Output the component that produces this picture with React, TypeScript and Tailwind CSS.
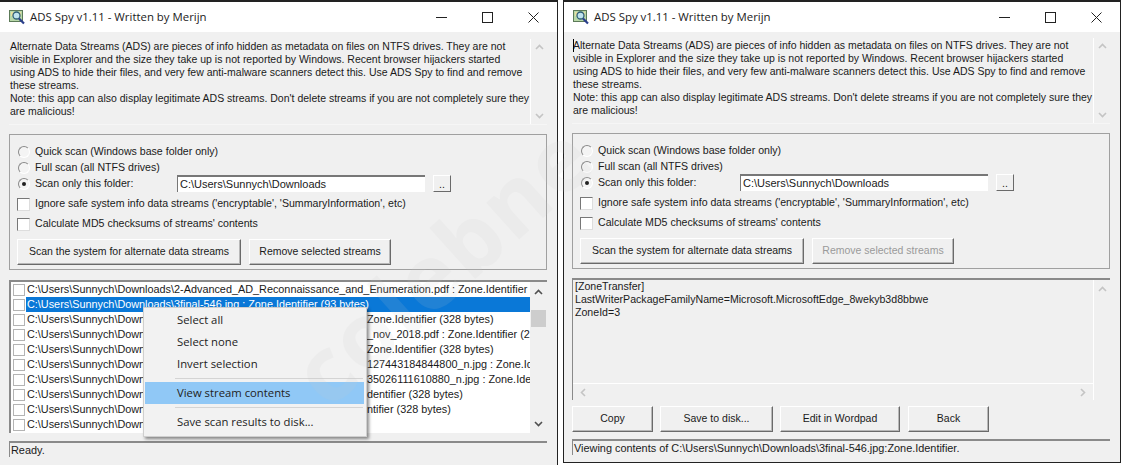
import React from 'react'

const info = [
	'Alternate Data Streams (ADS) are pieces of info hidden as metadata on files on NTFS drives. They are not',
	'visible in Explorer and the size they take up is not reported by Windows. Recent browser hijackers started',
	'using ADS to hide their files, and very few anti-malware scanners detect this. Use ADS Spy to find and remove',
	'these streams.',
	"Note: this app can also display legitimate ADS streams. Don't delete streams if you are not completely sure they",
	'are malicious!',
]

const first = 'C:\\Users\\Sunnych\\Downloads\\2-Advanced_AD_Reconnaissance_and_Enumeration.pdf : Zone.Identifier  (328 bytes)'
const selected = 'C:\\Users\\Sunnych\\Downloads\\3final-546.jpg : Zone.Identifier  (93 bytes)'
const prefix = 'C:\\Users\\Sunnych\\Downloads\\'

// the middle of these is hidden by the context menu, only the tail shows
const tails = [
	'Zone.Identifier  (328 bytes)',
	'_nov_2018.pdf : Zone.Identifier  (2 bytes)',
	'Zone.Identifier  (328 bytes)',
	'127443184844800_n.jpg : Zone.Identifier  (328 bytes)',
	'35026111610880_n.jpg : Zone.Identifier  (328 bytes)',
	'dentifier  (328 bytes)',
	'ntifier  (328 bytes)',
	'',
]

const AppIcon = () => (
	<svg width="16" height="16" viewBox="0 0 16 16" className="shrink-0">
		<rect x="0.5" y="1.5" width="13" height="11" fill="#b8d8a8" stroke="#5c7a58" />
		<rect x="2" y="3" width="10" height="4" fill="#e8e0a0" />
		<circle cx="7.5" cy="6.5" r="3.5" fill="#bfe3ee" stroke="#2f5f78" strokeWidth="1.3" />
		<path d="M10 9.5 15 14.5" stroke="#2b3f8c" strokeWidth="2.2" />
	</svg>
)

const TitleBar = () => (
	<div className="flex h-[30px] items-center bg-white pl-[9px]">
		<AppIcon />
		<span className="ml-[5px] font-['Open_Sans'] text-[11.4px] text-[#222]">ADS Spy v1.11 - Written by Merijn</span>
		<div className="ml-auto flex items-center gap-[35px] pr-[18px]">
			<svg width="11" height="11" viewBox="0 0 11 11"><path d="M0 5.5h11" stroke="#222" /></svg>
			<svg width="11" height="11" viewBox="0 0 11 11"><rect x="0.5" y="0.5" width="10" height="10" fill="none" stroke="#222" /></svg>
			<svg width="11" height="11" viewBox="0 0 11 11"><path d="M0.5 0.5l10 10M10.5 0.5l-10 10" stroke="#222" /></svg>
		</div>
	</div>
)

const Chevron = ({ up, dark }: { up?: boolean; dark?: boolean }) => (
	<svg width="9" height="6" viewBox="0 0 9 6">
		<path
			d={up ? 'M1 5l3.5-3.5L8 5' : 'M1 1l3.5 3.5L8 1'}
			fill="none"
			stroke={dark ? '#505050' : '#c4c4c4'}
			strokeWidth="1.6"
		/>
	</svg>
)

const InfoBox = ({ caret }: { caret?: boolean }) => (
	<div className="flex h-[86px] border-b border-b-[#f6f6f6]">
		<div className="relative flex-1 overflow-hidden pt-px pl-px text-[10.5px] leading-[13px] whitespace-nowrap">
			{caret && <span className="absolute left-px top-px h-[13px] w-px bg-black" />}
			{info.map((line) => (
				<div key={line}>{line}</div>
			))}
		</div>
		<div className="flex w-[17px] flex-col items-center justify-between border-l border-l-white py-[5px]">
			<Chevron up />
			<Chevron />
		</div>
	</div>
)

const Radio = ({ checked }: { checked?: boolean }) => (
	<span className="flex h-[12px] w-[12px] shrink-0 items-center justify-center rounded-full border border-t-[#8a8a8a] border-l-[#8a8a8a] border-r-white border-b-white bg-[#f4f4f4]">
		{checked && <span className="h-[4px] w-[4px] rounded-full bg-[#222]" />}
	</span>
)

const Check = () => (
	<span className="block h-[13px] w-[13px] shrink-0 border border-t-[#777] border-l-[#777] border-r-[#ddd] border-b-[#ddd] bg-white" />
)

const Button = ({ label, width, disabled }: { label: string; width: string; disabled?: boolean }) => (
	<button
		className={`h-[26px] shrink-0 border border-t-white border-l-white border-r-[#6a6a6a] border-b-[#6a6a6a] bg-[#f0f0f0] text-center text-[10.5px] shadow-[inset_-1px_-1px_0_#b8b8b8] ${width} ${disabled ? 'text-[#9a9a9a]' : ''}`}
	>
		{label}
	</button>
)

const Options = ({ removeDisabled }: { removeDisabled?: boolean }) => (
	<div className="h-[136px] border border-[#a0a0a0] pl-[7px] pt-[9px]">
		<div className="flex h-[16px] items-center gap-[5px] pl-px"><Radio /><span>Quick scan (Windows base folder only)</span></div>
		<div className="flex h-[15px] items-center gap-[5px] pl-px"><Radio /><span>Full scan (all NTFS drives)</span></div>
		<div className="flex h-[17px] items-center pl-px">
			<Radio checked />
			<span className="ml-[5px] w-[142px]">Scan only this folder:</span>
			<div className="flex h-[17px] w-[248px] items-center border-t-2 border-l border-t-[#777] border-l-[#777] bg-white pl-[2px] text-[11px]">C:\Users\Sunnych\Downloads</div>
			<button className="ml-[8px] h-[17px] w-[18px] border border-t-white border-l-white border-r-[#6a6a6a] border-b-[#6a6a6a] bg-[#f0f0f0] leading-[10px]">..</button>
		</div>
		<div className="mt-[2px] flex h-[20px] items-center gap-[5px]"><Check /><span>Ignore safe system info data streams ('encryptable', 'SummaryInformation', etc)</span></div>
		<div className="flex h-[20px] items-center gap-[5px]"><Check /><span>Calculate MD5 checksums of streams' contents</span></div>
		<div className="mt-[5px] flex gap-[8px]">
			<Button label="Scan the system for alternate data streams" width="w-[224px]" />
			<Button label="Remove selected streams" width="w-[142px]" disabled={removeDisabled} />
		</div>
	</div>
)

const StatusBar = ({ text }: { text: string }) => (
	<div className="flex h-[16px] items-center overflow-hidden border-t-2 border-l border-t-[#8a8a8a] border-l-[#8a8a8a] bg-[#f0f0f0] pl-px text-[10.9px] whitespace-nowrap">
		{text}
	</div>
)

const MenuItem = ({ label, active }: { label: string; active?: boolean }) => (
	<div className={`flex h-[22px] w-[219px] items-center pl-[32px] ${active ? 'bg-[#90c8f6]' : ''}`}>{label}</div>
)

const ContextMenu = () => (
	<div className="absolute left-[143px] top-[307px] w-[224px] border border-[#cfcfcf] bg-[#f2f2f2] pt-px pb-[3px] pl-px font-['Open_Sans'] text-[11.3px] text-[#222] shadow-[2px_2px_3px_rgba(0,0,0,0.45)]">
		<MenuItem label="Select all" />
		<MenuItem label="Select none" />
		<MenuItem label="Invert selection" />
		<div className="my-[3px] ml-[30px] h-px w-[188px] bg-[#d4d4d4]" />
		<MenuItem label="View stream contents" active />
		<div className="my-[3px] ml-[30px] h-px w-[188px] bg-[#d4d4d4]" />
		<MenuItem label="Save scan results to disk..." />
	</div>
)

const ListBox = () => <span className="block h-[12px] w-[12px] shrink-0 border border-[#b4b4b4] bg-white" />

const ScanList = () => (
	<div className="flex h-[153px] border-t-2 border-l-2 border-t-[#8a8a8a] border-l-[#8a8a8a] bg-white font-['Liberation_Sans'] text-[10.85px]">
		<div className="flex-1 overflow-hidden pl-[2px]">
			<div className="flex h-[15px] items-center whitespace-nowrap">
				<ListBox />
				<span className="ml-[2px] h-[15px] flex-1 overflow-hidden leading-[14px]">{first}</span>
			</div>
			<div className="flex h-[15px] items-center whitespace-nowrap">
				<ListBox />
				<span className="ml-px h-[15px] flex-1 overflow-hidden bg-[#0a78d7] pl-px leading-[14px] text-white">{selected}</span>
			</div>
			{tails.map((tail, i) => (
				<div key={i} className="flex h-[15px] items-center whitespace-nowrap">
					<ListBox />
					<span className="ml-[2px] h-[15px] w-[340px] shrink-0 overflow-hidden leading-[14px]">{prefix}</span>
					<span className="h-[15px] flex-1 overflow-hidden leading-[14px]">{tail}</span>
				</div>
			))}
		</div>
		<div className="flex w-[17px] flex-col items-center bg-[#f0f0f0] pt-[7px] pb-[6px]">
			<Chevron up dark />
			<div className="mt-[15px] h-[17px] w-[15px] bg-[#cdcdcd]" />
			<div className="flex-1" />
			<Chevron dark />
		</div>
	</div>
)

const ContentsView = () => (
	<div className="flex h-[122px] border-t-2 border-l border-t-[#8a8a8a] border-l-[#8a8a8a]">
		<div className="flex flex-1 flex-col">
			<div className="flex-1 pl-[2px] leading-[13px]">
				<div>[ZoneTransfer]</div>
				<div>LastWriterPackageFamilyName=Microsoft.MicrosoftEdge_8wekyb3d8bbwe</div>
				<div>ZoneId=3</div>
			</div>
			<div className="flex h-[17px] items-center justify-between border-t border-t-white px-[7px]">
				<svg width="6" height="9" viewBox="0 0 6 9"><path d="M5 1L1.5 4.5 5 8" fill="none" stroke="#c4c4c4" strokeWidth="1.6" /></svg>
				<svg width="6" height="9" viewBox="0 0 6 9"><path d="M1 1l3.5 3.5L1 8" fill="none" stroke="#c4c4c4" strokeWidth="1.6" /></svg>
			</div>
		</div>
		<div className="flex w-[17px] flex-col items-center border-l border-l-white pt-[6px]">
			<Chevron up />
		</div>
	</div>
)

const Watermark = () => (
	<div className="pointer-events-none absolute left-[305px] top-[340px] origin-left -rotate-[42deg] font-['Open_Sans'] text-[90px] leading-none font-bold tracking-[2px] whitespace-nowrap text-[#c8c8c8] opacity-[0.12]">
		colebne
	</div>
)

export default function App() {
	return (
		<div className="relative flex h-[465px] w-[1125px] overflow-hidden bg-white font-['Liberation_Sans'] text-[10.6px] text-[#1a1a1a]">
			<div className="h-[465px] w-[558px] border-t-2 border-r border-[#222] bg-[#f0f0f0]">
				<TitleBar />
				<div className="pt-[7px] pr-[10px] pl-[9px]">
					<InfoBox />
					<div className="mt-[9px]"><Options /></div>
					<div className="mt-[10px]"><ScanList /></div>
					<div className="mt-[8px]"><StatusBar text="Ready." /></div>
				</div>
			</div>
			<div className="ml-[5px] h-[463px] w-[558px] border-t-2 border-r border-b border-l border-[#222] bg-[#f0f0f0]">
				<TitleBar />
				<div className="pt-[6px] pr-[10px] pl-[8px]">
					<InfoBox caret />
					<div className="mt-[9px]"><Options removeDisabled /></div>
					<div className="mt-[9px]"><ContentsView /></div>
					<div className="mt-[6px] flex">
						<Button label="Copy" width="w-[81px]" />
						<div className="ml-[7px]"><Button label="Save to disk..." width="w-[113px]" /></div>
						<div className="ml-[7px]"><Button label="Edit in Wordpad" width="w-[120px]" /></div>
						<div className="ml-[8px]"><Button label="Back" width="w-[81px]" /></div>
					</div>
					<div className="mt-[7px]"><StatusBar text="Viewing contents of C:\Users\Sunnych\Downloads\3final-546.jpg:Zone.Identifier." /></div>
				</div>
			</div>
			<ContextMenu />
			<Watermark />
		</div>
	)
}
